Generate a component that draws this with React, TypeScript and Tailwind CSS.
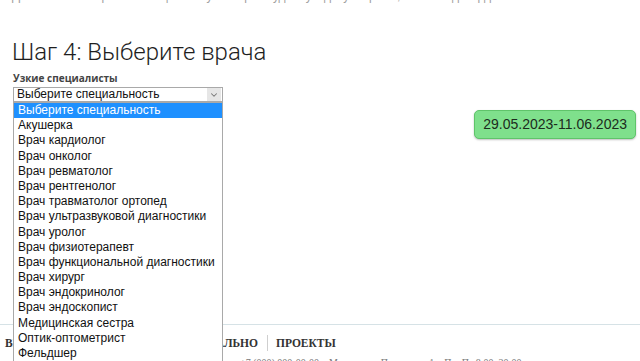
import { ChevronDown } from 'lucide-react'

const specialties = [
  'Выберите специальность',
  'Акушерка',
  'Врач кардиолог',
  'Врач онколог',
  'Врач ревматолог',
  'Врач рентгенолог',
  'Врач травматолог ортопед',
  'Врач ультразвуковой диагностики',
  'Врач уролог',
  'Врач физиотерапевт',
  'Врач функциональной диагностики',
  'Врач хирург',
  'Врач эндокринолог',
  'Врач эндоскопист',
  'Медицинская сестра',
  'Оптик-оптометрист',
  'Фельдшер',
]

export default function App() {
  return (
    <div className="relative w-[640px] h-[361px] overflow-hidden bg-white font-['Liberation_Sans',Arial,sans-serif]">
      {/* Top strip, cut off */}
      <div className="flex h-[16px] items-start overflow-hidden">
        <p className="mt-[-10px] pl-[12px] text-[12px] leading-[12px] text-[#a0a0a0] whitespace-nowrap">
          Для записи на прием к специалисту выберите удобную дату и время, затем подтвердите запись в личном кабинете
        </p>
        <div className="ml-auto w-[77px] h-[16px] shrink-0 rounded-bl-[6px] bg-[#4cae4f]" />
      </div>

      {/* Step heading */}
      <h2 className="mt-[22px] pl-[12px] text-[24px] leading-[28px] font-['Roboto',sans-serif] font-light text-[#1e1e1e]">
        Шаг 4: Выберите врача
      </h2>

      <div className="flex items-start pl-[13px] pr-[4px] mt-[5px]">
        <div className="w-[210px]">
          <div className="text-[10px] leading-[14px] font-bold text-[#444] font-['Open_Sans',sans-serif]">Узкие специалисты</div>
          <div className="mt-[2px] flex h-[15px] items-center border border-[#a9a9a9] bg-white">
            <span className="pl-[3px] text-[12px] leading-[13px] text-[#111]">Выберите специальность</span>
            <span className="ml-auto mr-[1px] flex h-[13px] w-[14px] items-center justify-center bg-[#e6e6e6]">
              <ChevronDown className="h-[10px] w-[10px] text-[#777]" strokeWidth={2.5} />
            </span>
          </div>
        </div>
        <div className="ml-auto mt-[39px] rounded-[5px] border border-[#5fc46a] bg-[#7fe08c] px-[8px] py-[5px] text-[14px] leading-[17px] text-[#1c2b1d] shadow-[0_1px_2px_rgba(0,0,0,0.25)]">
          29.05.2023-11.06.2023
        </div>
      </div>

      {/* Footer nav */}
      <div className="absolute left-0 right-0 top-[324px] border-t border-[#d6e2e6]">
        <div className="flex items-center pl-[5px] pt-[10px] font-['Liberation_Serif',serif] text-[11.5px] font-bold text-[#333] uppercase leading-[16px]">
          <div className="flex w-[253px]">
            <span>Врачи</span>
            <span className="ml-auto">Индивидуально</span>
          </div>
          <span className="ml-[9px] mr-[8px] h-[16px] w-px bg-[#cfcfcf]" />
          <span>Проекты</span>
        </div>
        <div className="pl-[240px] pt-[6px] text-[10px] leading-[12px] text-[#777] whitespace-nowrap font-['Liberation_Serif',serif]">
          +7 (000) 000-00-00 &nbsp;&nbsp; Москва, ул. Пример, д. 1 &nbsp;&nbsp; Пн–Пт 8:00–20:00
        </div>
      </div>

      {/* Open dropdown list */}
      <ul className="absolute left-[13px] top-[102px] w-[210px] border border-[#a9a9a9] bg-white">
        {specialties.map((s, i) => (
          <li
            key={s}
            className={
              i === 0
                ? 'h-[15.2px] pl-[4px] text-[12px] leading-[15px] whitespace-nowrap bg-[#1e90ff] text-white'
                : 'h-[15.2px] pl-[4px] text-[12px] leading-[15px] whitespace-nowrap text-[#111]'
            }
          >
            {s}
          </li>
        ))}
      </ul>
    </div>
  )
}
